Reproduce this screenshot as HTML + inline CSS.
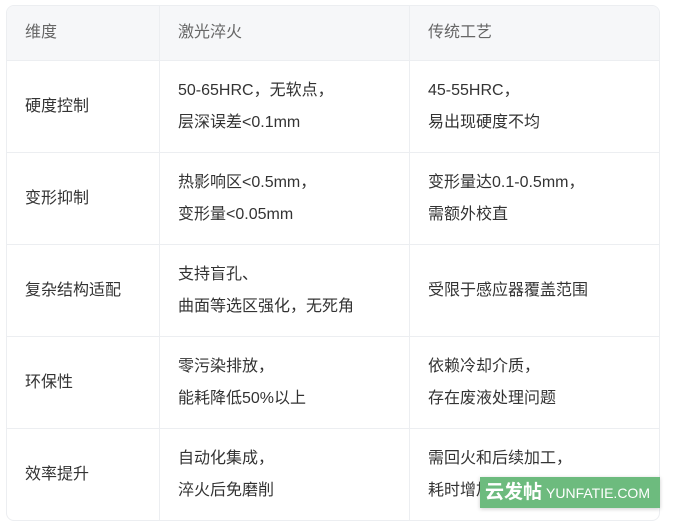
<!DOCTYPE html>
<html><head><meta charset="utf-8"><style>
body{margin:0;background:#fff;width:680px;height:527px;overflow:hidden;font-family:"Liberation Sans","Noto Sans CJK SC",sans-serif;}
table{position:absolute;left:6px;top:5px;width:654px;border-collapse:separate;border-spacing:0;border:1px solid #eceef1;border-radius:8px;overflow:hidden;}
td,th{border-right:1px solid #eceef1;border-bottom:1px solid #eceef1;padding:0 0 0 18px;text-align:left;font-size:16px;line-height:32px;color:#333;font-weight:normal;vertical-align:middle;}
th{background:#f6f7f9;color:#666;height:54px;}
td{height:91px;}
tr td:last-child,tr th:last-child{border-right:none;}
tr:last-child td{border-bottom:none;}
.wm{position:absolute;left:480px;top:477px;width:180px;height:31px;background:#6dbb7e;color:#fff;font-size:14px;line-height:31px;white-space:nowrap;box-shadow:0 1px 4px rgba(0,0,0,.2);overflow:hidden;}
.wm b{font-size:19px;margin-left:5px;margin-right:4px;}
</style></head><body>
<table>
<tr><th style="width:134px">维度</th><th style="width:231px">激光淬火</th><th>传统工艺</th></tr>
<tr><td>硬度控制</td><td>50-65HRC，无软点，<br>层深误差&lt;0.1mm</td><td>45-55HRC，<br>易出现硬度不均</td></tr>
<tr><td>变形抑制</td><td>热影响区&lt;0.5mm，<br>变形量&lt;0.05mm</td><td>变形量达0.1-0.5mm，<br>需额外校直</td></tr>
<tr><td>复杂结构适配</td><td>支持盲孔、<br>曲面等选区强化，无死角</td><td>受限于感应器覆盖范围</td></tr>
<tr><td>环保性</td><td>零污染排放，<br>能耗降低50%以上</td><td>依赖冷却介质，<br>存在废液处理问题</td></tr>
<tr><td>效率提升</td><td>自动化集成，<br>淬火后免磨削</td><td>需回火和后续加工，<br>耗时增加</td></tr>
</table>
<div class="wm"><b>云发帖</b>YUNFATIE.COM</div>
</body></html>
